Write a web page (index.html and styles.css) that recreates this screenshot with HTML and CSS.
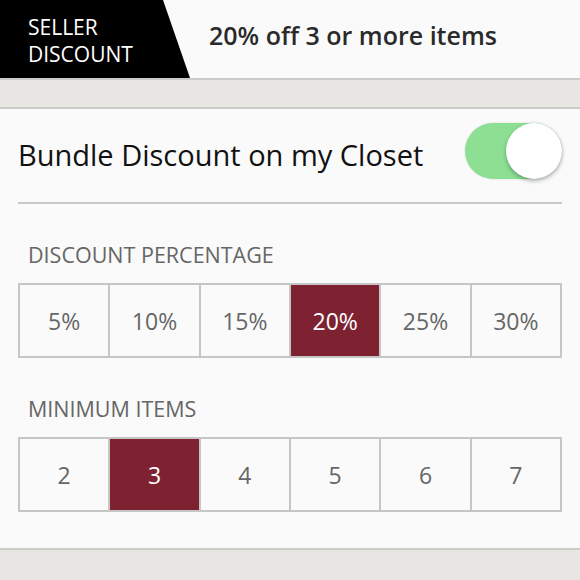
FILE: index.html
```html
<!DOCTYPE html>
<html lang="en">
<head>
    <meta charset="UTF-8">
    <meta name="viewport" content="width=device-width, initial-scale=1.0">
    <title>Seller Discount</title>
    <link rel="stylesheet" href="styles.css">
</head>
<body>

    <div class="top-bar">
        <div class="tag">SELLER<br>DISCOUNT</div>
        <div class="summary">20% off 3 or more items</div>
    </div>

    <div class="band"></div>

    <div class="card">
        <div class="toggle-row">
            <span>Bundle Discount on my Closet</span>
            <div class="switch"><div class="knob"></div></div>
        </div>

        <div class="label">DISCOUNT PERCENTAGE</div>
        <div class="choices">
            <div class="choice">5%</div>
            <div class="choice">10%</div>
            <div class="choice">15%</div>
            <div class="choice selected">20%</div>
            <div class="choice">25%</div>
            <div class="choice">30%</div>
        </div>

        <div class="label">MINIMUM ITEMS</div>
        <div class="choices">
            <div class="choice">2</div>
            <div class="choice selected">3</div>
            <div class="choice">4</div>
            <div class="choice">5</div>
            <div class="choice">6</div>
            <div class="choice">7</div>
        </div>
    </div>

</body>
</html>
```

FILE: styles.css
```css
body {
    margin: 0;
    padding: 0;
    font-family: "Open Sans", Lato, sans-serif;
    background-color: #e8e6e2;
    height: 580px;
    overflow: hidden;
}

.top-bar {
    display: flex;
    align-items: center;
    height: 78px;
    background-color: #fafafa;
    border-bottom: 2px solid #cdcbc7;
}

.tag {
    width: 190px;
    height: 100%;
    padding: 3px 0 0 28px;
    box-sizing: border-box;
    display: flex;
    align-items: center;
    background-color: #000;
    color: #fff;
    font-size: 21px;
    line-height: 27px;
    clip-path: polygon(0 0, 163px 0, 190px 100%, 0 100%);
}

.summary {
    margin-left: 19px;
    font-size: 25px;
    font-weight: 600;
    color: #2a2a2a;
    padding-bottom: 8px;
}

.band {
    height: 27px;
}

.card {
    background-color: #fafafa;
    border-top: 2px solid #cdcbc7;
    border-bottom: 2px solid #cdcbc7;
    padding: 0 18px 36px;
}

.toggle-row {
    display: flex;
    justify-content: space-between;
    align-items: center;
    height: 93px;
    border-bottom: 2px solid #c8c8c8;
    font-size: 29px;
    color: #111;
}

.toggle-row span {
    padding-bottom: 3px;
}

.switch {
    width: 97px;
    height: 56px;
    margin-bottom: 10px;
    border-radius: 28px;
    background-color: #8ddf94;
    display: flex;
    justify-content: flex-end;
    box-shadow: 0 0 2px rgba(0, 0, 0, 0.15);
}

.knob {
    width: 56px;
    height: 56px;
    border-radius: 50%;
    background-color: #fff;
    box-shadow: 0 2px 4px rgba(0, 0, 0, 0.3);
}

.label {
    margin: 41px 0 18px 10px;
    font-size: 21.5px;
    line-height: 20px;
    color: #666;
}

.choices {
    display: grid;
    grid-template-columns: repeat(6, 1fr);
    gap: 2px;
    background-color: #c6c6c6;
    border: 2px solid #c6c6c6;
}

.choice {
    height: 71px;
    display: flex;
    align-items: center;
    justify-content: center;
    background-color: #fafafa;
    font-size: 23px;
    color: #666;
}

.choice.selected {
    background-color: #7e2231;
    color: #fff;
}
```
